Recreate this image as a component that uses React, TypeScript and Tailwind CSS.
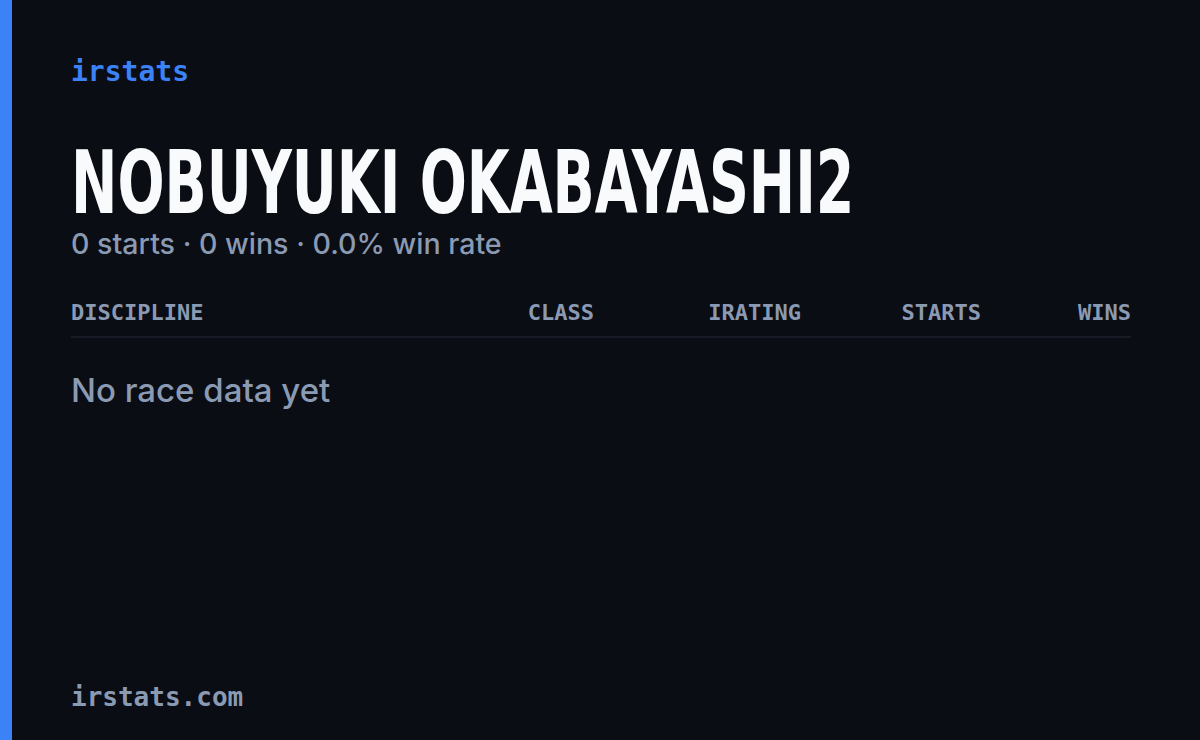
import React from 'react';

const mono = "font-['DejaVu_Sans_Mono','Liberation_Mono',monospace]";
const sans = "font-['Inter','Noto_Sans',sans-serif]";

const columns = [
    { label: 'DISCIPLINE', align: 'text-left' },
    { label: 'CLASS', align: 'text-right' },
    { label: 'IRATING', align: 'text-right' },
    { label: 'STARTS', align: 'text-right' },
    { label: 'WINS', align: 'text-right' },
];

export default function App() {
    return (
        <div className="w-[1200px] h-[740px] flex bg-[#0a0d14] overflow-hidden">
            {/* accent bar */}
            <div className="w-[12px] h-full bg-[#3b82f6] shrink-0" />

            <div className="flex-1 min-w-0 flex flex-col justify-between pl-[59px] pr-[69px] pt-[54px] pb-[26px]">
                <div className="flex flex-col min-w-0">
                    <div className={`${mono} text-[28px] leading-[36px] font-semibold text-[#3b82f6]`}>
                        irstats
                    </div>

                    {/* player name */}
                    <div className="mt-[50px] h-[86px] flex items-center min-w-0">
                        <h1 className="inline-block origin-left scale-x-[0.7] whitespace-nowrap font-['DejaVu_Sans_Condensed','DejaVu_Sans',sans-serif] font-bold text-[88px] leading-[80px] text-[#f8fafc]">
                            NOBUYUKI OKABAYASHI2
                        </h1>
                    </div>
                    <div className={`${sans} text-[28.6px] leading-[36px] font-medium text-[#8b9ab3]`}>
                        0 starts · 0 wins · 0.0% win rate
                    </div>

                    {/* stats table */}
                    <div className="mt-[36px]">
                        <div className={`grid grid-cols-[323px_200px_207px_180px_150px] pb-[8px] border-b-2 border-[#161b25] ${mono} text-[22px] leading-[30px] font-semibold text-[#8b9ab3]`}>
                            {columns.map((c) => (
                                <div key={c.label} className={c.align}>{c.label}</div>
                            ))}
                        </div>
                        <div className={`${sans} text-[33px] leading-[40px] font-medium text-[#8b9ab3] mt-[32px]`}>
                            No race data yet
                        </div>
                    </div>
                </div>

                <div className={`${mono} text-[26px] leading-[34px] font-semibold text-[#8b9ab3]`}>
                    irstats.com
                </div>
            </div>
        </div>
    );
}
